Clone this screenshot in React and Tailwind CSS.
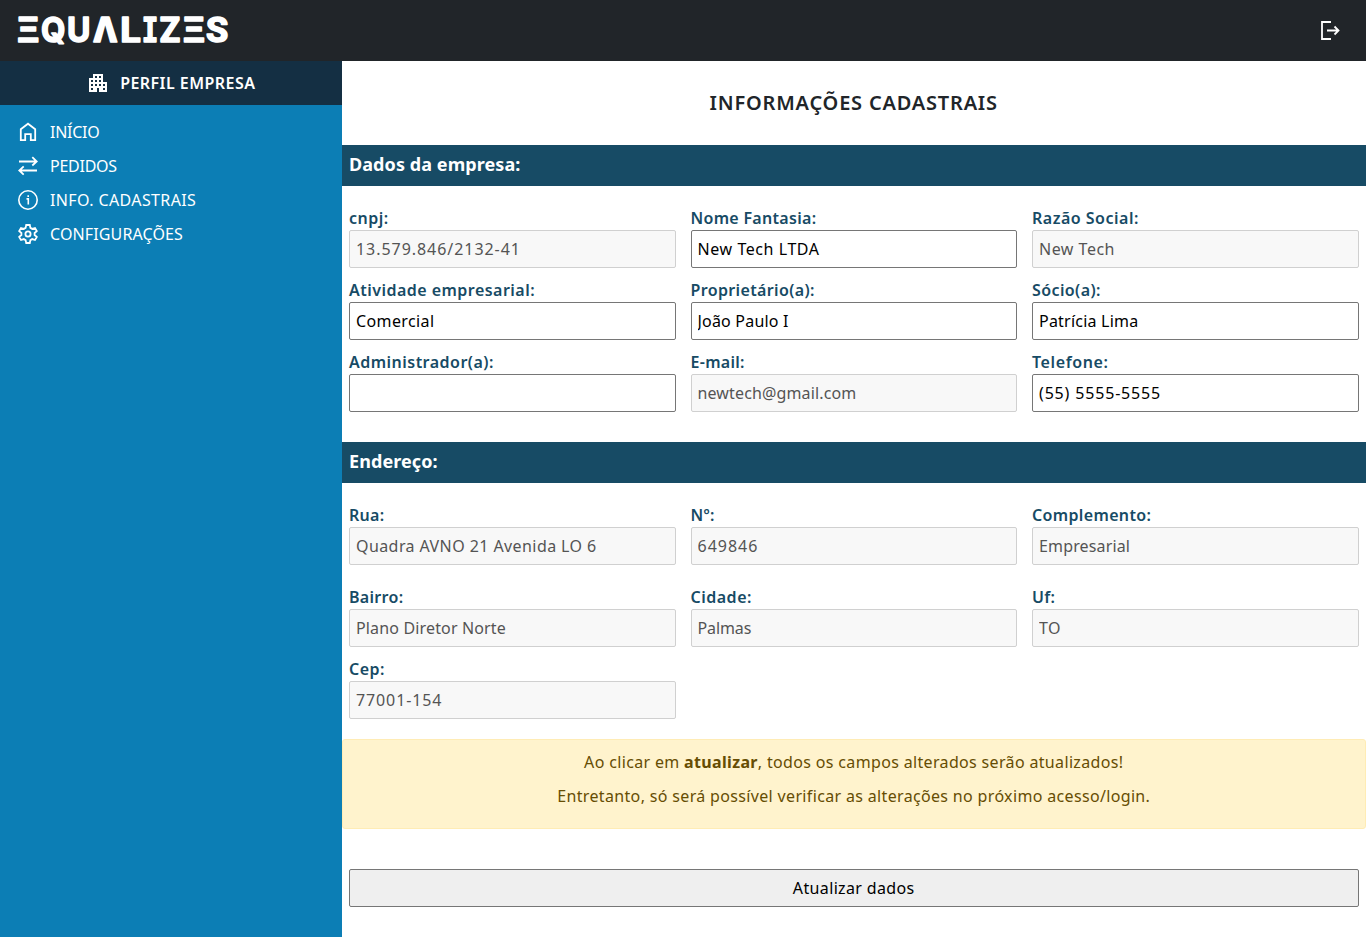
import React from "react";
import { MdApartment } from "react-icons/md";

const MONO = "font-['DejaVu_Sans_Mono',monospace] text-[34px] font-bold";
const SANS = "font-['Roboto',sans-serif] text-[35px] font-bold";
const INTER = "font-['Inter',sans-serif] text-[34px] font-bold";

const LOGO = [
  ["Ξ", 17, 22.2, SANS],
  ["Q", 40.9, 24.4, INTER],
  ["U", 67, 23.4, INTER],
  ["Λ", 93.3, 24, MONO],
  ["L", 120.2, 20.2, SANS],
  ["I", 141.7, 16.6, MONO],
  ["Z", 159.7, 20.4, SANS],
  ["Ξ", 182.8, 22.2, SANS],
  ["S", 206, 22.2, SANS],
];

function Logo() {
  return (
    <svg width="240" height="61" viewBox="0 0 240 61" fill="white" stroke="white" strokeWidth="1.6" strokeLinejoin="round" aria-label="Equalizes">
      {LOGO.map(([ch, x, w, font], i) => (
        <text key={i} x={x} y="42.3" textLength={w} lengthAdjust="spacingAndGlyphs" className={font}>
          {ch}
        </text>
      ))}
    </svg>
  );
}

const stroke = { fill: "none", stroke: "currentColor", strokeWidth: 1.8 };

const HomeIcon = () => (
  <svg width="20" height="20" viewBox="0 0 20 20" {...stroke}>
    <path d="M2.8 18.2V7.2L10 1.7l7.2 5.5v11h-4.4v-6H7.2v6z" />
  </svg>
);
const SwapIcon = () => (
  <svg width="20" height="20" viewBox="0 0 20 20" {...stroke}>
    <path d="M1 5.5h17.5M14.3 1.2l4.4 4.3-4.4 4M19 14.5H1.5M5.7 10.3l-4.4 4.2 4.4 4.2" />
  </svg>
);
const InfoIcon = () => (
  <svg width="20" height="20" viewBox="0 0 20 20" {...stroke}>
    <circle cx="10" cy="10" r="9.2" strokeWidth="1.6" />
    <path d="M8.5 8.9h1.8v5.6M10.2 5.3v1.8" strokeWidth="1.6" />
  </svg>
);
const GearIcon = () => (
  <svg width="20" height="20" viewBox="0 0 20 20" {...stroke}>
    <path d="M8.2 1h3.6l.6 2.9 1.8 1 2.8-.9 1.8 3.1-2.2 1.9v2l2.2 1.9-1.8 3.1-2.8-.9-1.8 1-.6 2.9H8.2l-.6-2.9-1.8-1-2.8.9-1.8-3.1L3.4 11V9L1.2 7.1 3 4l2.8.9 1.8-1z" />
    <circle cx="10" cy="10" r="2.6" />
  </svg>
);

const MENU = [
  [HomeIcon, "INÍCIO", "tracking-[-0.25px]"],
  [SwapIcon, "PEDIDOS", "tracking-[-0.25px]"],
  [InfoIcon, "INFO. CADASTRAIS", "tracking-[0.38px]"],
  [GearIcon, "CONFIGURAÇÕES", "tracking-[0.13px]"],
];

function Field({ label, value, off, lt = "tracking-[0.3px]", vt = "tracking-[0.5px]" }) {
  return (
    <div className="px-[7.5px]">
      <label className={`block h-6 text-[16px] leading-6 font-semibold text-[#174b65] ${lt}`}>{label}</label>
      <input
        defaultValue={value}
        disabled={off}
        className={`block h-[38px] w-full rounded-[2px] border border-[#767676] bg-white px-1.5 text-[16px] text-black disabled:border-[#d0d0d0] disabled:bg-[#f8f8f8] disabled:text-[#545454] ${vt}`}
      />
    </div>
  );
}

const Bar = ({ children }) => (
  <h2 className="h-[41px] bg-[#174b65] px-[7.5px] text-[18px] leading-[39px] font-bold tracking-[0.08px] text-white">{children}</h2>
);

export default function App() {
  return (
    <div className="flex h-[937px] flex-col overflow-hidden bg-white font-['Noto_Sans',sans-serif]">
      <header className="flex h-[61px] shrink-0 items-center justify-between bg-[#212529] pr-[26px] text-white">
        <Logo />
        <svg width="20" height="21" viewBox="0 0 20 21" fill="none" stroke="white" strokeWidth="1.8">
          <path d="M11 2H2v17h9M7 10.5h11.5M14.5 6.5l4 4-4 4" />
        </svg>
      </header>
      <div className="flex flex-1">
        <aside className="w-[341.5px] shrink-0 bg-[#0c7eb5] text-white">
          <div className="flex h-11 items-center justify-center gap-[10px] bg-[#142f43] text-[16px] font-semibold">
            <MdApartment size={24} />
            <span className="tracking-[0.45px]">PERFIL EMPRESA</span>
          </div>
          <nav className="flex flex-col pt-2.5 pl-[18px]">
            {MENU.map(([Icon, text, track]) => (
              <a key={text} className="flex h-[34px] items-center gap-3 text-[16px]">
                <Icon />
                <span className={track}>{text}</span>
              </a>
            ))}
          </nav>
        </aside>
        <main className="flex-1">
          <h1 className="h-21 text-center text-[20px] leading-[84px] font-semibold tracking-[0.8px] text-[#212529]">INFORMAÇÕES CADASTRAIS</h1>
          <Bar>Dados da empresa:</Bar>
          <div className="grid grid-cols-3 gap-y-2.5 pt-5 pb-[30px]">
            <Field label="cnpj:" lt="tracking-[0.5px]" value="13.579.846/2132-41" vt="tracking-[0.95px]" off />
            <Field label="Nome Fantasia:" value="New Tech LTDA" vt="tracking-[0.57px]" />
            <Field label="Razão Social:" lt="tracking-[0.5px]" value="New Tech" off />
            <Field label="Atividade empresarial:" lt="tracking-[0.47px]" value="Comercial" vt="tracking-[0.38px]" />
            <Field label="Proprietário(a):" lt="tracking-[0.36px]" value="João Paulo I" vt="tracking-[0.2px]" />
            <Field label="Sócio(a):" lt="tracking-[0.4px]" value="Patrícia Lima" vt="tracking-[0.22px]" />
            <Field label="Administrador(a):" lt="tracking-[0.48px]" value="" />
            <Field label="E-mail:" value="newtech@gmail.com" vt="tracking-[0.14px]" off />
            <Field label="Telefone:" lt="tracking-[0.6px]" value="(55) 5555-5555" vt="tracking-[0.83px]" />
          </div>
          <Bar>Endereço:</Bar>
          <div className="grid grid-cols-3 pt-5">
            <Field label="Rua:" value="Quadra AVNO 21 Avenida LO 6" vt="tracking-[0.42px]" off />
            <Field label="Nº:" lt="tracking-[0.4px]" value="649846" vt="tracking-[1px]" off />
            <Field label="Complemento:" lt="tracking-[0.35px]" value="Empresarial" vt="tracking-[0.15px]" off />
          </div>
          <div className="grid grid-cols-3 gap-y-2.5 py-5">
            <Field label="Bairro:" value="Plano Diretor Norte" vt="tracking-[0.15px]" off />
            <Field label="Cidade:" lt="tracking-[0.5px]" value="Palmas" vt="tracking-[-0.1px]" off />
            <Field label="Uf:" value="TO" off />
            <Field label="Cep:" lt="tracking-[0.5px]" value="77001-154" vt="tracking-[0.88px]" off />
          </div>
          <div className="flex h-[90px] flex-col gap-2.5 rounded-[3px] border border-[#ffecb5] bg-[#fff3cd] pt-2.5 text-center text-[16px] leading-6 tracking-[0.34px] text-[#664d03]">
            <p>
              Ao clicar em <b>atualizar</b>, todos os campos alterados serão atualizados!
            </p>
            <p>Entretanto, só será possível verificar as alterações no próximo acesso/login.</p>
          </div>
          <div className="px-[7.5px] pt-10">
            <button className="h-[38px] w-full rounded-[2px] border border-[#767676] bg-[#efefef] text-[16px] tracking-[0.36px] text-black">Atualizar dados</button>
          </div>
        </main>
      </div>
    </div>
  );
}
